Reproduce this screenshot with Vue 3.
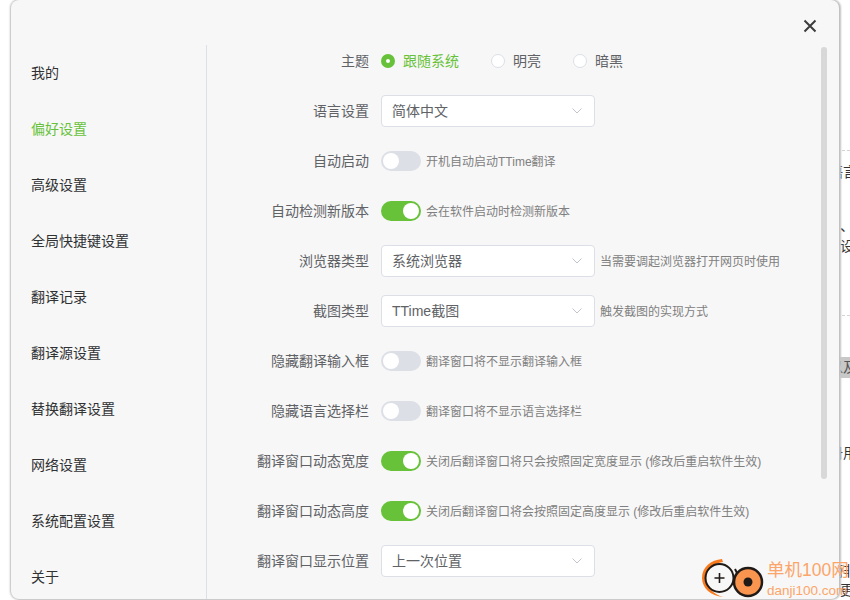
<template>
  <div class="page">
    <div class="backdrop">
      <div class="dash" style="top: 150px"></div>
      <span class="frag late" style="top: 162px">语言</span>
      <span class="frag" style="top: 216px">项、</span>
      <span class="frag" style="top: 236px">的设</span>
      <div class="dash" style="top: 315px"></div>
      <span class="frag late hl" style="top: 357px">以及</span>
      <span class="frag late" style="top: 443px">册用</span>
      <span class="frag late" style="top: 561px">而非</span>
      <span class="frag" style="top: 580px">多更</span>
    </div>

    <div class="modal">
      <button class="close-btn">
        <svg width="14" height="14" viewBox="0 0 14 14">
          <path d="M1.5 1.5 L12.5 12.5 M12.5 1.5 L1.5 12.5" stroke="#3c3c3c" stroke-width="2" fill="none" />
        </svg>
      </button>

      <ul class="side">
        <li v-for="item in menu" :key="item" :class="{ active: item === '偏好设置' }">{{ item }}</li>
      </ul>

      <div class="main">
        <div class="row">
          <label>主题</label>
          <div class="radios">
            <span v-for="(r, i) in themes" :key="r" class="radio" :class="{ on: i === 0 }">
              <i></i><b>{{ r }}</b>
            </span>
          </div>
        </div>
        <div v-for="row in rows" :key="row.label" class="row">
          <label>{{ row.label }}</label>
          <div v-if="row.select" class="select">
            <span>{{ row.select }}</span>
            <svg width="10" height="6" viewBox="0 0 10 6">
              <path d="M0.5 0.5 L5 5 L9.5 0.5" stroke="#c0c4cc" stroke-width="1" fill="none" />
            </svg>
          </div>
          <div v-else class="switch" :class="{ on: row.on }"><i></i></div>
          <span v-if="row.desc" class="desc">{{ row.desc }}</span>
        </div>
      </div>

      <div class="scroll-thumb"></div>
    </div>

    <div class="mark">
      <svg width="64" height="42" viewBox="0 0 64 42">
        <path d="M20 1 C9 2 0 9 0 20 C0 30 9 38 21 39 C11 36 4 29 4 20 C4 12 11 5 21 4 Z" fill="#f97a1c" />
        <circle cx="17.500" cy="20" r="14" fill="none" stroke="#1f1a17" stroke-width="2" />
        <path d="M17.500 15 V25 M12.500 20 H22.500" stroke="#1f1a17" stroke-width="1.600" />
        <path d="M33 11 L36 17" stroke="#1f1a17" stroke-width="2" />
        <circle cx="46" cy="24" r="14" fill="#fa9550" stroke="#1f1a17" stroke-width="2.500" />
        <circle cx="46" cy="24" r="4.500" fill="#1f1a17" />
      </svg>
      <div class="mark-text">
        <span class="mark-cn">单机100网</span>
        <span class="mark-en">danji100.com</span>
      </div>
    </div>
  </div>
</template>

<script setup>
const menu = ['我的', '偏好设置', '高级设置', '全局快捷键设置', '翻译记录', '翻译源设置', '替换翻译设置', '网络设置', '系统配置设置', '关于']
const themes = ['跟随系统', '明亮', '暗黑']
const rows = [
  { label: '语言设置', select: '简体中文' },
  { label: '自动启动', on: false, desc: '开机自动启动TTime翻译' },
  { label: '自动检测新版本', on: true, desc: '会在软件启动时检测新版本' },
  { label: '浏览器类型', select: '系统浏览器', desc: '当需要调起浏览器打开网页时使用' },
  { label: '截图类型', select: 'TTime截图', desc: '触发截图的实现方式' },
  { label: '隐藏翻译输入框', on: false, desc: '翻译窗口将不显示翻译输入框' },
  { label: '隐藏语言选择栏', on: false, desc: '翻译窗口将不显示语言选择栏' },
  { label: '翻译窗口动态宽度', on: true, desc: '关闭后翻译窗口将只会按照固定宽度显示 (修改后重启软件生效)' },
  { label: '翻译窗口动态高度', on: true, desc: '关闭后翻译窗口将会按照固定高度显示 (修改后重启软件生效)' },
  { label: '翻译窗口显示位置', select: '上一次位置' }
]
</script>

<style>
html, body { margin: 0; background: #fff; overflow: hidden; }
</style>

<style scoped>
.page {
  position: relative;
  width: 850px;
  height: 600px;
  overflow: hidden;
  background: #fff;
  font-family: "Liberation Sans", "Noto Sans CJK SC", sans-serif;
}

/* 弹窗后面露出的页面 */
.backdrop { position: absolute; inset: 0; }
.dash {
  position: absolute;
  left: 842px;
  width: 8px;
  border-top: 1px dashed #d4d4d4;
}
.frag {
  position: absolute;
  left: 826px;
  font-size: 14px;
  line-height: 20px;
  color: #333;
  white-space: nowrap;
}
.frag.late { left: 829px; }
.frag.hl { line-height: 21px; background: #c8c8c8; color: #555; }

.modal {
  position: relative;
  display: flex;
  box-sizing: border-box;
  width: 828px;
  height: 599px;
  margin-left: 11px;
  background: #f7f7f7;
  border-radius: 8px;
  box-shadow: 0 0 2px 1px #bdbdbd, 2px 0 2px #ccc;
  overflow: hidden;
}

.close-btn {
  position: absolute;
  top: 19px;
  right: 22px;
  padding: 0;
  border: none;
  background: none;
  line-height: 0;
}

.side {
  flex: none;
  width: 195px;
  margin: 45px 0 0;
  padding: 0;
  list-style: none;
  border-right: 1px solid #dcdfe6;
  font-size: 14px;
  color: #303133;
}
.side li {
  height: 56px;
  line-height: 56px;
  padding-left: 20px;
}
.side li.active { color: #67c23a; }

.main {
  flex: 1;
  padding-top: 36px;
}
.row {
  display: flex;
  align-items: center;
  height: 50px;
}
.row label {
  flex: none;
  width: 162px;
  margin-right: 12px;
  padding-bottom: 2px;
  text-align: right;
  font-size: 14px;
  color: #606266;
}

.radios { display: flex; gap: 32px; }
.radio {
  display: flex;
  align-items: center;
  gap: 8px;
  font-size: 14px;
  color: #606266;
}
.radio b { font-weight: normal; padding-bottom: 2px; }
.radio i {
  box-sizing: border-box;
  width: 14px;
  height: 14px;
  border: 1px solid #dcdfe6;
  border-radius: 50%;
  background: #fff;
}
.radio.on { color: #67c23a; }
.radio.on i {
  border: 5px solid #67c23a;
}

.select {
  display: flex;
  align-items: center;
  justify-content: space-between;
  box-sizing: border-box;
  width: 214px;
  height: 32px;
  padding: 0 12px 0 10px;
  background: #fff;
  border: 1px solid #dcdfe6;
  border-radius: 4px;
  font-size: 14px;
  color: #606266;
}
.select span { padding-bottom: 2px; }

.switch {
  display: flex;
  align-items: center;
  width: 40px;
  height: 20px;
  padding: 0 2px;
  box-sizing: border-box;
  border-radius: 10px;
  background: #dcdfe6;
}
.switch i {
  width: 16px;
  height: 16px;
  border-radius: 50%;
  background: #fff;
}
.switch.on {
  justify-content: flex-end;
  background: #67c23a;
}

.desc {
  margin-left: 5px;
  padding-bottom: 2px;
  font-size: 12px;
  color: #808080;
}

.scroll-thumb {
  position: absolute;
  top: 47px;
  left: 810px;
  width: 6px;
  height: 432px;
  border-radius: 3px;
  background: #d8d8d8;
}

/* 水印 */
.mark {
  position: absolute;
  left: 702px;
  top: 558px;
  display: flex;
  gap: 1px;
}
.mark-text {
  display: flex;
  flex-direction: column;
  color: #fca56a;
  white-space: nowrap;
}
.mark-cn { font-size: 17.500px; line-height: 22px; margin-top: 1px; }
.mark-en { font-size: 13.500px; line-height: 18px; margin-top: 1px; }
</style>
